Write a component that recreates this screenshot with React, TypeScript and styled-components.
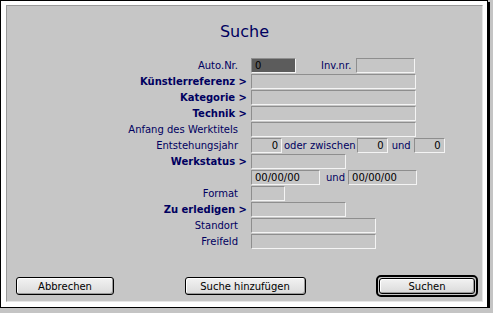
import styled, { createGlobalStyle } from "styled-components";

const GlobalStyle = createGlobalStyle`
  html, body {
    margin: 0;
    padding: 0;
    background: #c4c4c4;
  }
  body {
    font-family: "DejaVu Sans", "Liberation Sans", sans-serif;
  }
`;

const Window = styled.div`
  box-sizing: border-box;
  width: 488px;
  height: 308px;
  border: 1px solid #000;
  background: #fff;
  padding: 4px 4px 5px 5px;
  box-shadow: 2px 2px 0 #000;
`;

const Panel = styled.div`
  box-sizing: border-box;
  height: 100%;
  background: #c6c6c6;
  border-top: 1px solid #9a9a9a;
  border-left: 1px solid #9a9a9a;
  border-right: 1px solid #e6e6e6;
  border-bottom: 1px solid #e6e6e6;
  display: flex;
  flex-direction: column;
`;

const Title = styled.h1`
  margin: 16px 0 0;
  height: 36px;
  text-align: center;
  font-size: 16px;
  line-height: 20px;
  font-weight: normal;
  color: #00005e;
`;

const Form = styled.div`
  display: grid;
  grid-template-columns: 240px 1fr;
  grid-auto-rows: 16px;
  column-gap: 4px;
`;

const Label = styled.div<{ $link?: boolean }>`
  text-align: right;
  white-space: nowrap;
  font-size: 10px;
  line-height: 15px;
  color: #000060;
  font-weight: ${(p) => (p.$link ? "bold" : "normal")};
  padding-right: ${(p) => (p.$link ? "0" : "9px")};
`;

const Line = styled.div`
  display: flex;
  align-items: flex-start;
`;

const Field = styled.div<{ $w: number; $dark?: boolean; $right?: boolean }>`
  box-sizing: border-box;
  width: ${(p) => p.$w}px;
  height: 15px;
  border-top: 1px solid #8e8e8e;
  border-left: 1px solid #8e8e8e;
  border-right: 1px solid #f4f4f4;
  border-bottom: 1px solid #f4f4f4;
  background: ${(p) => (p.$dark ? "#5c5c5c" : "#c6c6c6")};
  font-size: 10px;
  line-height: 13px;
  padding: 0 3px;
  color: #000;
  text-align: ${(p) => (p.$right ? "right" : "left")};
  white-space: nowrap;
  overflow: hidden;
`;

const Inline = styled.span<{ $ml: number; $mr: number }>`
  font-size: 10px;
  line-height: 15px;
  color: #000060;
  margin: 0 ${(p) => p.$mr}px 0 ${(p) => p.$ml}px;
  white-space: nowrap;
`;

const ButtonBar = styled.div`
  margin-top: auto;
  display: flex;
  justify-content: space-between;
  align-items: center;
  padding: 0 4px 4px 9px;
`;

const Button = styled.button<{ $w: number; $h?: number }>`
  box-sizing: border-box;
  width: ${(p) => p.$w}px;
  height: ${(p) => p.$h ?? 18}px;
  border: 1px solid #000;
  border-radius: 3px;
  background: linear-gradient(#f2f2f2, #dadada);
  box-shadow: inset -1px -1px 0 #9a9a9a, inset 1px 1px 0 #fff;
  font-family: "DejaVu Sans", "Liberation Sans", sans-serif;
  font-size: 10px;
  color: #000;
  padding: 0;
`;

const DefaultRing = styled.div`
  border: 2px solid #000;
  border-radius: 5px;
  padding: 1px;
  display: flex;
`;

export default function App() {
  return (
    <>
      <GlobalStyle />
      <Window>
        <Panel>
          <Title>Suche</Title>
          <Form>
            <Label>Auto.Nr.</Label>
            <Line>
              <Field $w={45} $dark>0</Field>
              <Inline $ml={25} $mr={5}>Inv.nr.</Inline>
              <Field $w={59} />
            </Line>

            <Label $link>Künstlerreferenz &gt;</Label>
            <Line><Field $w={165} /></Line>

            <Label $link>Kategorie &gt;</Label>
            <Line><Field $w={165} /></Line>

            <Label $link>Technik &gt;</Label>
            <Line><Field $w={165} /></Line>

            <Label>Anfang des Werktitels</Label>
            <Line><Field $w={165} /></Line>

            <Label>Entstehungsjahr</Label>
            <Line>
              <Field $w={31} $right>0</Field>
              <Inline $ml={2} $mr={1}>oder zwischen</Inline>
              <Field $w={31} $right>0</Field>
              <Inline $ml={4} $mr={3}>und</Inline>
              <Field $w={31} $right>0</Field>
            </Line>

            <Label $link>Werkstatus &gt;</Label>
            <Line><Field $w={95} /></Line>

            <Label />
            <Line>
              <Field $w={69}>00/00/00</Field>
              <Inline $ml={6} $mr={3}>und</Inline>
              <Field $w={69}>00/00/00</Field>
            </Line>

            <Label>Format</Label>
            <Line><Field $w={34} /></Line>

            <Label $link>Zu erledigen &gt;</Label>
            <Line><Field $w={95} /></Line>

            <Label>Standort</Label>
            <Line><Field $w={125} /></Line>

            <Label>Freifeld</Label>
            <Line><Field $w={125} /></Line>
          </Form>
          <ButtonBar>
            <Button $w={98}>Abbrechen</Button>
            <Button $w={121}>Suche hinzufügen</Button>
            <DefaultRing>
              <Button $w={96} $h={16}>Suchen</Button>
            </DefaultRing>
          </ButtonBar>
        </Panel>
      </Window>
    </>
  );
}
